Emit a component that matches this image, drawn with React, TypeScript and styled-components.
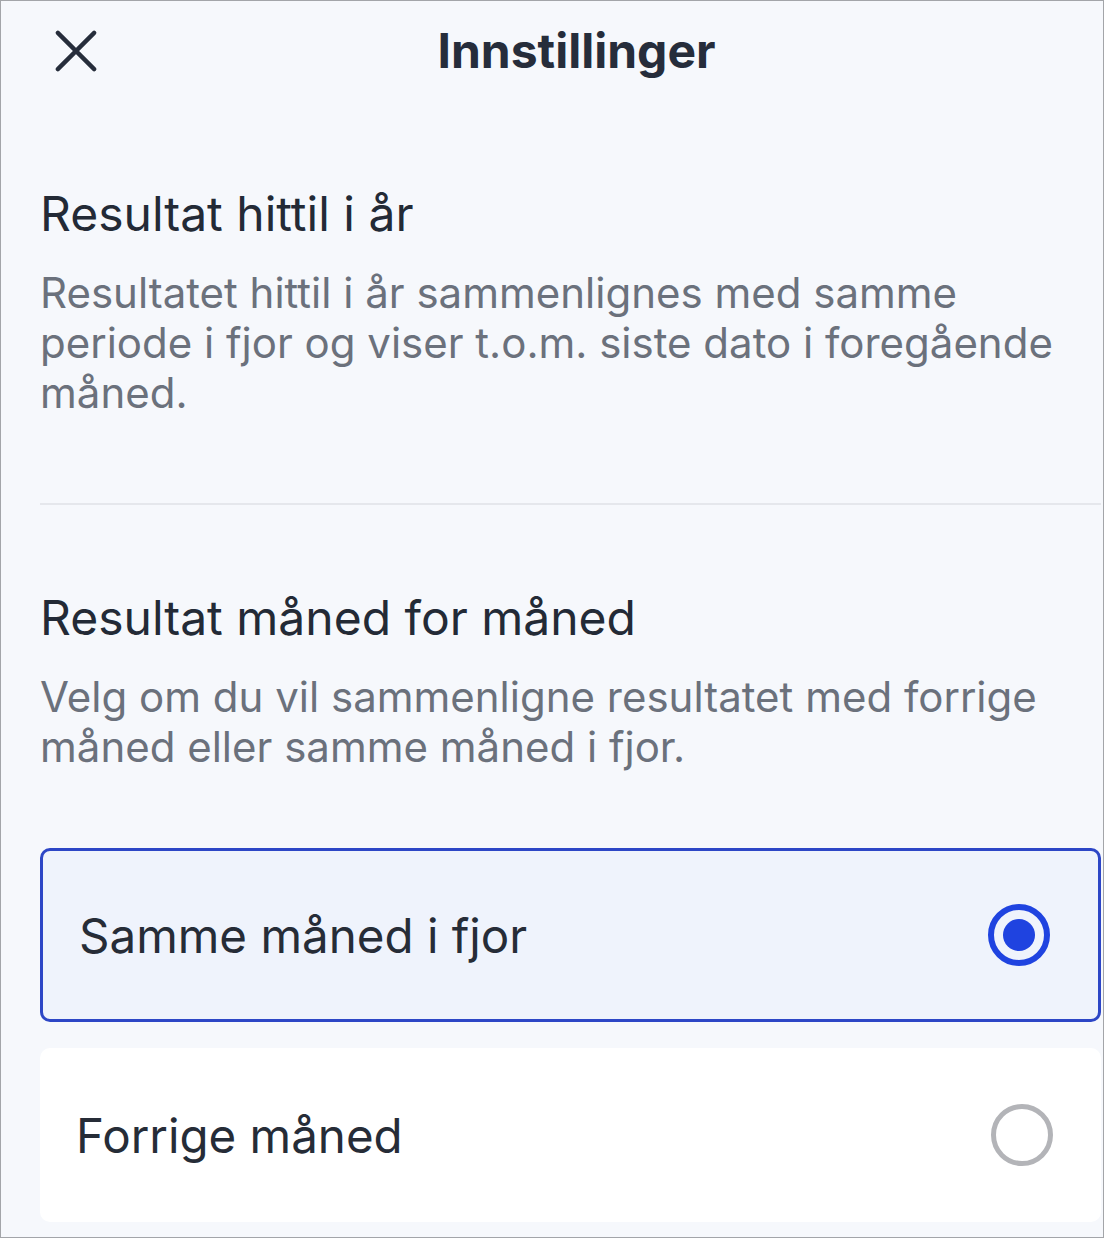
import styled, { createGlobalStyle } from 'styled-components';

const GlobalStyle = createGlobalStyle`
  * {
    box-sizing: border-box;
  }
  body {
    margin: 0;
    font-family: Inter, "Noto Sans", "Liberation Sans", sans-serif;
    font-optical-sizing: none;
    background: #f6f8fc;
  }
`

interface OptionData {
    id: string,
    label: string,
}

const options: OptionData[] = [
    { id: 'last-year', label: 'Samme måned i fjor' },
    { id: 'previous', label: 'Forrige måned' },
];

const CloseIcon = () => (
    <svg width="44" height="44" viewBox="0 0 44 44" fill="none">
        <path d="M3 3L41 41M41 3L3 41" stroke="#262d3b" strokeWidth="4.5" strokeLinecap="round" />
    </svg>
);

const App = () => {
    const selected = 'last-year';

    return (
        <>
            <GlobalStyle />
            <Frame>
                <Header>
                    <CloseButton aria-label="Lukk">
                        <CloseIcon />
                    </CloseButton>
                    <Title>Innstillinger</Title>
                    <span />
                </Header>

                <Section>
                    <Heading>Resultat hittil i år</Heading>
                    <Description>
                        Resultatet hittil i år sammenlignes med samme periode i fjor og viser t.o.m. siste dato i foregående måned.
                    </Description>
                </Section>

                <Divider />

                <Section>
                    <Heading>Resultat måned for måned</Heading>
                    <Description>
                        Velg om du vil sammenligne resultatet med forrige måned eller samme måned i fjor.
                    </Description>
                </Section>

                <OptionList>
                    {options.map(option => (
                        <OptionCard key={option.id} $active={option.id === selected}>
                            <OptionLabel>{option.label}</OptionLabel>
                            <Radio $active={option.id === selected} />
                        </OptionCard>
                    ))}
                </OptionList>
            </Frame>
        </>
    );
}

export default App;

const Frame = styled.div`
    width: 1104px;
    height: 1238px;
    border: 1px solid #a3a5a9;
    background-color: #f6f8fc;
    padding: 0 2px 0 39px;
    overflow: hidden;
    display: flex;
    flex-direction: column;
`

const Header = styled.header`
    display: grid;
    grid-template-columns: 1fr auto 1fr;
    align-items: center;
    height: 100px;
    padding-left: 12px;
`

const CloseButton = styled.button`
    justify-self: start;
    display: flex;
    align-items: center;
    justify-content: center;
    width: 48px;
    height: 48px;
    margin-left: 0;
    padding: 0;
    border: none;
    background: transparent;

    svg {
        width: 42px;
        height: 42px;
    }
`

const Title = styled.h1`
    margin: 0;
    font-weight: 700;
    font-size: 48px;
    line-height: 56px;
    color: #262d3b;
`

const Section = styled.section`
    display: flex;
    flex-direction: column;
    gap: 25px;
    padding-top: 84px;
`

const Heading = styled.h2`
    margin: 0;
    font-weight: 400;
    font-size: 48px;
    line-height: 58px;
    color: #232a36;
`

const Description = styled.p`
    margin: 0;
    font-weight: 400;
    font-size: 42px;
    line-height: 50px;
    color: #6b717c;
`

const Divider = styled.hr`
    margin: 85px 0 0 0;
    border: none;
    height: 2px;
    background-color: #e5e7ec;
`

const OptionList = styled.div`
    display: flex;
    flex-direction: column;
    gap: 26px;
    margin-top: 76px;
`

const OptionCard = styled.label<{ $active: boolean }>`
    display: flex;
    align-items: center;
    justify-content: space-between;
    height: 174px;
    padding: 0 48px 0 36px;
    border-radius: 10px;
    border: ${props => props.$active ? '3px solid #2d46c6' : 'none'};
    background-color: ${props => props.$active ? '#eff3fc' : '#ffffff'};
`

const OptionLabel = styled.span`
    font-size: 47.5px;
    font-weight: 400;
    color: #262c37;
`

const Radio = styled.span<{ $active: boolean }>`
    position: relative;
    width: 62px;
    height: 62px;
    border-radius: 50%;
    border: ${props => props.$active ? '6px solid #1f43e0' : '5px solid #b3b4b8'};
    background: transparent;

    &::after {
        content: '';
        display: ${props => props.$active ? 'block' : 'none'};
        position: absolute;
        inset: 9px;
        border-radius: 50%;
        background-color: #1f43e0;
    }
`
